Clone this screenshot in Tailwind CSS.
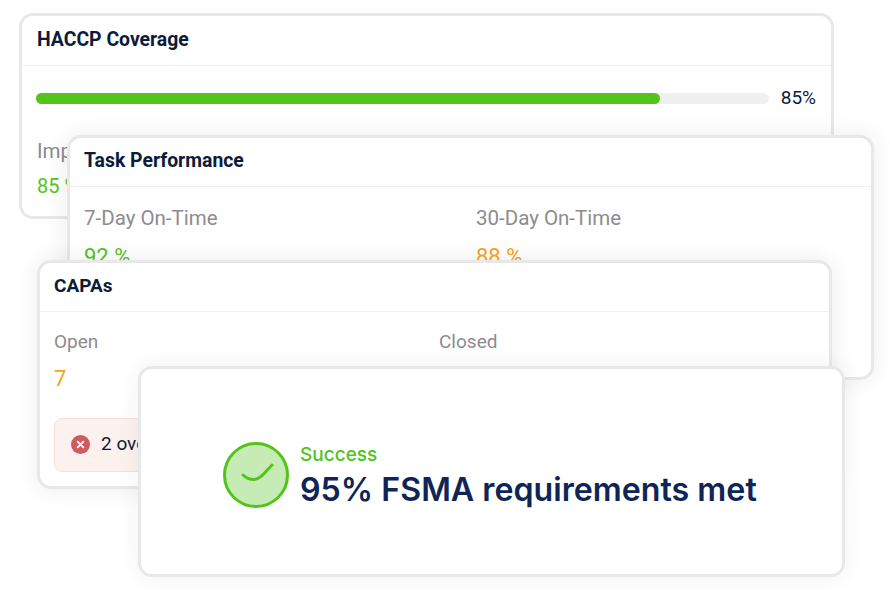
<!DOCTYPE html>
<html lang="en">
<head>
  <meta charset="UTF-8">
  <title>Compliance cards</title>
  <script src="https://cdn.jsdelivr.net/npm/@tailwindcss/browser@4"></script>
</head>
<body class="bg-white">
  <div class="relative w-[890px] h-[590px] overflow-hidden font-['Roboto',sans-serif]">

    <!-- HACCP Coverage -->
    <section class="absolute left-[19px] top-[13px] w-[815px] h-[206px] bg-white border-[3px] border-[#e8e8e8] rounded-[14px]">
      <h2 class="h-[50px] px-[15px] pb-[1px] flex items-center border-b border-[#f0f0f0] text-[19.4px] font-bold text-[#0b1b3a]">HACCP Coverage</h2>
      <div class="px-[15px] pt-[18px]">
        <div class="flex items-center gap-[12px] ml-[-1px]">
          <div class="w-[733px] h-[11px] rounded-full bg-[#f0f0f0]">
            <div class="w-[624px] h-full rounded-full bg-[#52c41a]"></div>
          </div>
          <span class="text-[19px] text-[#0b1b3a]">85%</span>
        </div>
        <p class="mt-[23px] text-[20.5px] text-[#8c8c8c]">Implemented</p>
        <p class="mt-[5px] text-[20px] text-[#52c41a]">85 %</p>
      </div>
    </section>

    <!-- Task Performance -->
    <section class="absolute left-[67px] top-[135px] w-[807px] h-[245px] bg-white border-[3px] border-[#e8e8e8] rounded-[14px] shadow-[0_0_24px_rgba(0,0,0,0.08)]">
      <h2 class="h-[49px] px-[14px] pb-[2px] flex items-center border-b border-[#f0f0f0] text-[19.4px] font-bold text-[#0b1b3a]">Task Performance</h2>
      <div class="px-[14px] pt-[16px] grid grid-cols-[392px_1fr]">
        <div>
          <p class="text-[20.5px] text-[#8c8c8c]">7-Day On-Time</p>
          <p class="mt-[6px] text-[22px] text-[#52c41a]">92 %</p>
        </div>
        <div>
          <p class="text-[20.5px] text-[#8c8c8c]">30-Day On-Time</p>
          <p class="mt-[6px] text-[22px] text-[#faa21a]">88 %</p>
        </div>
      </div>
    </section>

    <!-- CAPAs -->
    <section class="absolute left-[37px] top-[260px] w-[795px] h-[229px] bg-white border-[3px] border-[#e8e8e8] rounded-[14px] shadow-[0_0_24px_rgba(0,0,0,0.08)]">
      <h2 class="h-[49px] px-[14px] pb-[2px] flex items-center border-b border-[#f0f0f0] text-[19px] font-bold text-[#0b1b3a]">CAPAs</h2>
      <div class="px-[14px] pt-[16px]">
        <div class="grid grid-cols-[385px_1fr]">
          <p class="text-[19px] text-[#8c8c8c]">Open</p>
          <p class="text-[19px] text-[#8c8c8c]">Closed</p>
          <p class="mt-[5px] text-[22px] text-[#faa21a]">7</p>
        </div>
        <div class="mt-[23px] h-[54px] px-[16px] flex items-center gap-[11px] bg-[#fdf1f0] border border-[#f8dedc] rounded-[8px]">
          <svg class="w-[19px] h-[19px] shrink-0" viewBox="0 0 20 20">
            <circle cx="10" cy="10" r="10" fill="#cf5b5f"/>
            <path d="M7 7l6 6M13 7l-6 6" stroke="#fff" stroke-width="2" stroke-linecap="round"/>
          </svg>
          <span class="text-[19px] text-[#0b1b3a]">2 overdue</span>
        </div>
      </div>
    </section>

    <!-- Success toast -->
    <section class="absolute left-[138px] top-[366px] w-[707px] h-[211px] pl-[82px] pt-[6px] flex items-center gap-[11px] bg-white border-[3px] border-[#e8e8e8] rounded-[14px] shadow-[0_0_24px_rgba(0,0,0,0.06)] font-['Inter',sans-serif]">
      <svg class="w-[66px] h-[66px] shrink-0" viewBox="0 0 66 66" fill="none">
        <circle cx="33" cy="33" r="31.5" fill="#c6ebb5" stroke="#52c41a" stroke-width="3"/>
        <path d="M20 33c3 3 7 4.500 11 4.500c6 0 11-7 18-14.500" stroke="#52c41a" stroke-width="3" stroke-linecap="round"/>
      </svg>
      <div class="mt-[2px]">
        <p class="text-[19px] leading-[23px] font-medium text-[#52c41a]">Success</p>
        <p class="mt-[5px] text-[32.2px] leading-[38px] font-semibold text-[#0f2557]">95% FSMA requirements met</p>
      </div>
    </section>

  </div>
</body>
</html>
